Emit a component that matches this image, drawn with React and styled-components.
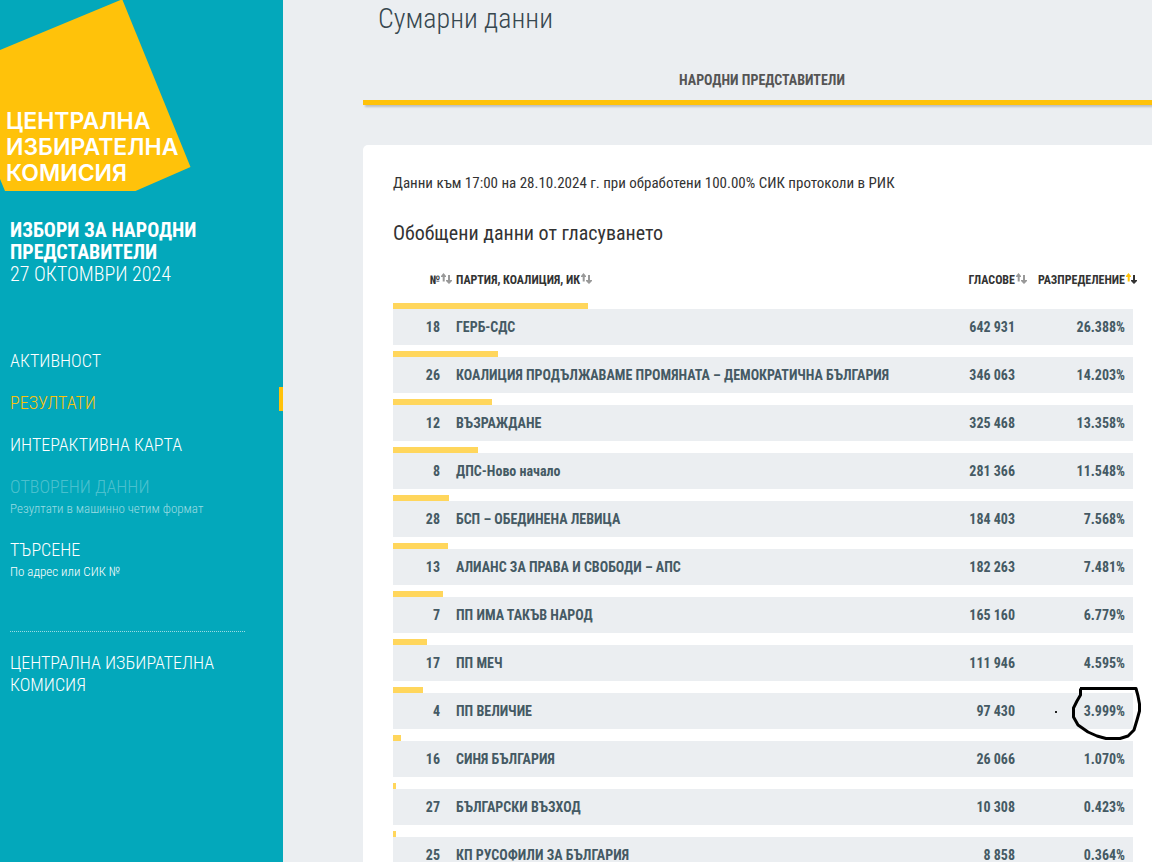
import styled, { createGlobalStyle } from "styled-components"

const parties = [
  { no: 18, name: "ГЕРБ-СДС", votes: "642 931", share: "26.388" },
  { no: 26, name: "КОАЛИЦИЯ ПРОДЪЛЖАВАМЕ ПРОМЯНАТА – ДЕМОКРАТИЧНА БЪЛГАРИЯ", votes: "346 063", share: "14.203" },
  { no: 12, name: "ВЪЗРАЖДАНЕ", votes: "325 468", share: "13.358" },
  { no: 8, name: "ДПС-Ново начало", votes: "281 366", share: "11.548" },
  { no: 28, name: "БСП – ОБЕДИНЕНА ЛЕВИЦА", votes: "184 403", share: "7.568" },
  { no: 13, name: "АЛИАНС ЗА ПРАВА И СВОБОДИ – АПС", votes: "182 263", share: "7.481" },
  { no: 7, name: "ПП ИМА ТАКЪВ НАРОД", votes: "165 160", share: "6.779" },
  { no: 17, name: "ПП МЕЧ", votes: "111 946", share: "4.595" },
  { no: 4, name: "ПП ВЕЛИЧИЕ", votes: "97 430", share: "3.999", marked: true },
  { no: 16, name: "СИНЯ БЪЛГАРИЯ", votes: "26 066", share: "1.070" },
  { no: 27, name: "БЪЛГАРСКИ ВЪЗХОД", votes: "10 308", share: "0.423" },
  { no: 25, name: "КП РУСОФИЛИ ЗА БЪЛГАРИЯ", votes: "8 858", share: "0.364" },
]

const columns = [
  { label: "№", align: "right", width: "55px" },
  { label: "ПАРТИЯ, КОАЛИЦИЯ, ИК", align: "left" },
  { label: "ГЛАСОВЕ", align: "right", width: "110px" },
  { label: "РАЗПРЕДЕЛЕНИЕ", align: "right", width: "110px", sorted: true },
]

export default function App() {
  return (
    <Page lang="bg">
      <GlobalStyle />
      <Sidebar>
        <Logo />
        <Election>
          <strong>ИЗБОРИ ЗА НАРОДНИ ПРЕДСТАВИТЕЛИ</strong>
          <span>27 ОКТОМВРИ 2024</span>
        </Election>
        <Nav>
          <NavItem href="#activity">АКТИВНОСТ</NavItem>
          <NavItem href="#results" $active>РЕЗУЛТАТИ</NavItem>
          <NavItem href="#map">ИНТЕРАКТИВНА КАРТА</NavItem>
          <NavItem href="#opendata" $disabled>
            ОТВОРЕНИ ДАННИ
            <Hint>Резултати в машинно четим формат</Hint>
          </NavItem>
          <NavItem href="#search">
            ТЪРСЕНЕ
            <Hint>По адрес или СИК №</Hint>
          </NavItem>
        </Nav>
        <Divider />
        <NavItem href="#cik">ЦЕНТРАЛНА ИЗБИРАТЕЛНА КОМИСИЯ</NavItem>
      </Sidebar>
      <Main>
        <Title>Сумарни данни</Title>
        <Tabs>
          <Tab type="button">НАРОДНИ ПРЕДСТАВИТЕЛИ</Tab>
        </Tabs>
        <Card>
          <Status>Данни към 17:00 на 28.10.2024 г. при обработени 100.00% СИК протоколи в РИК</Status>
          <Subtitle>Обобщени данни от гласуването</Subtitle>
          <Results />
        </Card>
      </Main>
    </Page>
  )
}

function Logo() {
  return (
    <LogoImage viewBox="0 0 192 192" role="img" aria-label="Централна избирателна комисия">
      <polygon points="0,50 120.5,0 122.5,0 190.5,167 135.5,191 5,191 0,179" fill="#ffc20a" />
      <LogoText x="6" y="129">ЦЕНТРАЛНА</LogoText>
      <LogoText x="6" y="155">ИЗБИРАТЕЛНА</LogoText>
      <LogoText x="6" y="181">КОМИСИЯ</LogoText>
    </LogoImage>
  )
}

function Results() {
  return (
    <Table>
      <thead>
        <tr>
          {columns.map((column) => (
            <HeadCell key={column.label} $align={column.align} $width={column.width}>
              <SortButton type="button">
                {column.label}
                <SortIcon viewBox="0 0 11 11" aria-hidden="true">
                  <path d="M2.500 0L5 3V4H3.700V8.500H1.700V4H0V3Z" fill={column.sorted ? "#ffc20a" : "#999"} />
                  <path d="M7 2H9V7H11V8L8 11L5 8V7H7Z" fill={column.sorted ? "#333" : "#999"} />
                </SortIcon>
              </SortButton>
            </HeadCell>
          ))}
        </tr>
      </thead>
      {parties.map((party) => (
        <tbody key={party.no}>
          <tr>
            <BarCell colSpan={4}>
              <Bar style={{ width: `${party.share}%` }} />
            </BarCell>
          </tr>
          <tr>
            <Cell $align="right">{party.no}</Cell>
            <Cell>{party.name}</Cell>
            <Cell $align="right">{party.votes}</Cell>
            <Cell $align="right">
              {party.share}%
              {party.marked && <Scribble />}
            </Cell>
          </tr>
        </tbody>
      ))}
    </Table>
  )
}

function Scribble() {
  return (
    <ScribbleImage viewBox="0 0 92 58" aria-hidden="true">
      <path
        d="M30 4.500H86L88 12L89.500 20V27L87 36L84 46L78 52L70 54.500H56L47 52L38 48L28 41L23.500 33V24L27 17L30.500 11V4.500"
        fill="none"
        stroke="#000"
        strokeWidth="3"
        strokeLinejoin="round"
      />
      <rect x="5" y="27" width="2" height="2" fill="#222" />
    </ScribbleImage>
  )
}

const GlobalStyle = createGlobalStyle`
  * {
    box-sizing: border-box;
  }

  body {
    margin: 0;
    overflow-x: hidden;
    background: #ebeef1;
    color: #333;
    font-family: "Roboto Condensed", "Liberation Sans Narrow", Roboto, sans-serif;
    font-size: 14px;
  }
`

const Page = styled.div`
  display: flex;
  min-height: 100vh;
  overflow: hidden;
`

const Sidebar = styled.aside`
  flex: 0 0 283px;
  background: #03a8bb;
  color: white;
`

const LogoImage = styled.svg`
  display: block;
  width: 192px;
  height: 192px;
`

const LogoText = styled.text`
  fill: white;
  font-family: Inter, sans-serif;
  font-size: 23px;
  font-weight: 600;
`

const Election = styled.h1`
  display: grid;
  margin: 27px 38px 60px 10px;
  font-size: 20px;
  font-weight: 300;
  line-height: 22px;

  strong {
    font-weight: 700;
  }
`

const Nav = styled.nav`
  display: grid;
  gap: 16px;
`

const NavItem = styled.a`
  display: block;
  padding: 5px 42px 0 10px;
  background: ${(props) =>
    props.$active ? "linear-gradient(#ffc20a, #ffc20a) right top / 4px 24px no-repeat" : "none"};
  color: ${(props) => (props.$active ? "#ffc20a" : props.$disabled ? "rgba(255, 255, 255, 0.3)" : "white")};
  font-size: 18px;
  font-weight: 300;
  line-height: 22px;
  text-decoration: none;

  & + & {
    margin-top: -1px;
  }

  small {
    color: ${(props) => (props.$disabled ? "rgba(255, 255, 255, 0.6)" : "white")};
  }
`

const Hint = styled.small`
  display: block;
  font-size: 13px;
  line-height: 21px;
`

const Divider = styled.hr`
  margin: 49px 38px 15px 10px;
  border: 0;
  border-top: 1px dotted rgba(255, 255, 255, 0.6);
`

const Main = styled.main`
  flex: 1 0 800px;
  margin-left: 80px;
`

const Title = styled.h2`
  margin: 0 15px 20px;
  color: #37474f;
  font-size: 28px;
  font-weight: 300;
  line-height: 38px;
`

const Tabs = styled.div`
  display: flex;
  margin-bottom: 40px;
`

const Tab = styled.button`
  flex: 1;
  height: 47px;
  padding: 2px 2px 0 0;
  border: 0;
  border-bottom: 5px solid #ffc20a;
  background: #ebeef1;
  box-shadow: 2px 2px 2px rgba(0, 0, 0, 0.2);
  color: #555;
  font: inherit;
  font-weight: 700;
`

const Card = styled.section`
  padding: 28px 30px;
  border-radius: 5px;
  background: white;
`

const Status = styled.p`
  margin: 0 0 28px;
  font-size: 15px;
  line-height: 20px;
`

const Subtitle = styled.h3`
  margin: 0 0 18px;
  font-size: 20px;
  font-weight: 400;
  line-height: 24px;
`

const Table = styled.table`
  width: 100%;
  border-spacing: 0;
  table-layout: fixed;
`

const HeadCell = styled.th`
  width: ${(props) => props.$width || "auto"};
  height: 34px;
  padding: 0 8px 2px;
  text-align: ${(props) => props.$align};
`

const SortButton = styled.button`
  position: relative;
  padding: 0;
  border: 0;
  background: none;
  color: #333;
  font: inherit;
  font-size: 12px;
  font-weight: 700;
  white-space: nowrap;
`

const SortIcon = styled.svg`
  position: absolute;
  top: 0;
  left: 100%;
  width: 11px;
  height: 11px;
  margin-left: 1px;
`

const BarCell = styled.td`
  padding: 6px 0 0;
`

const Bar = styled.div`
  height: 6px;
  min-width: 3px;
  background: #ffd65c;
`

const Cell = styled.td`
  position: relative;
  height: 36px;
  padding: 0 8px 1px;
  background: #ebeef1;
  color: #455a64;
  font-weight: 700;
  text-align: ${(props) => props.$align || "left"};
  white-space: nowrap;
`

const ScribbleImage = styled.svg`
  position: absolute;
  top: -9px;
  right: -9px;
  z-index: 1;
  width: 92px;
  height: 58px;
`
